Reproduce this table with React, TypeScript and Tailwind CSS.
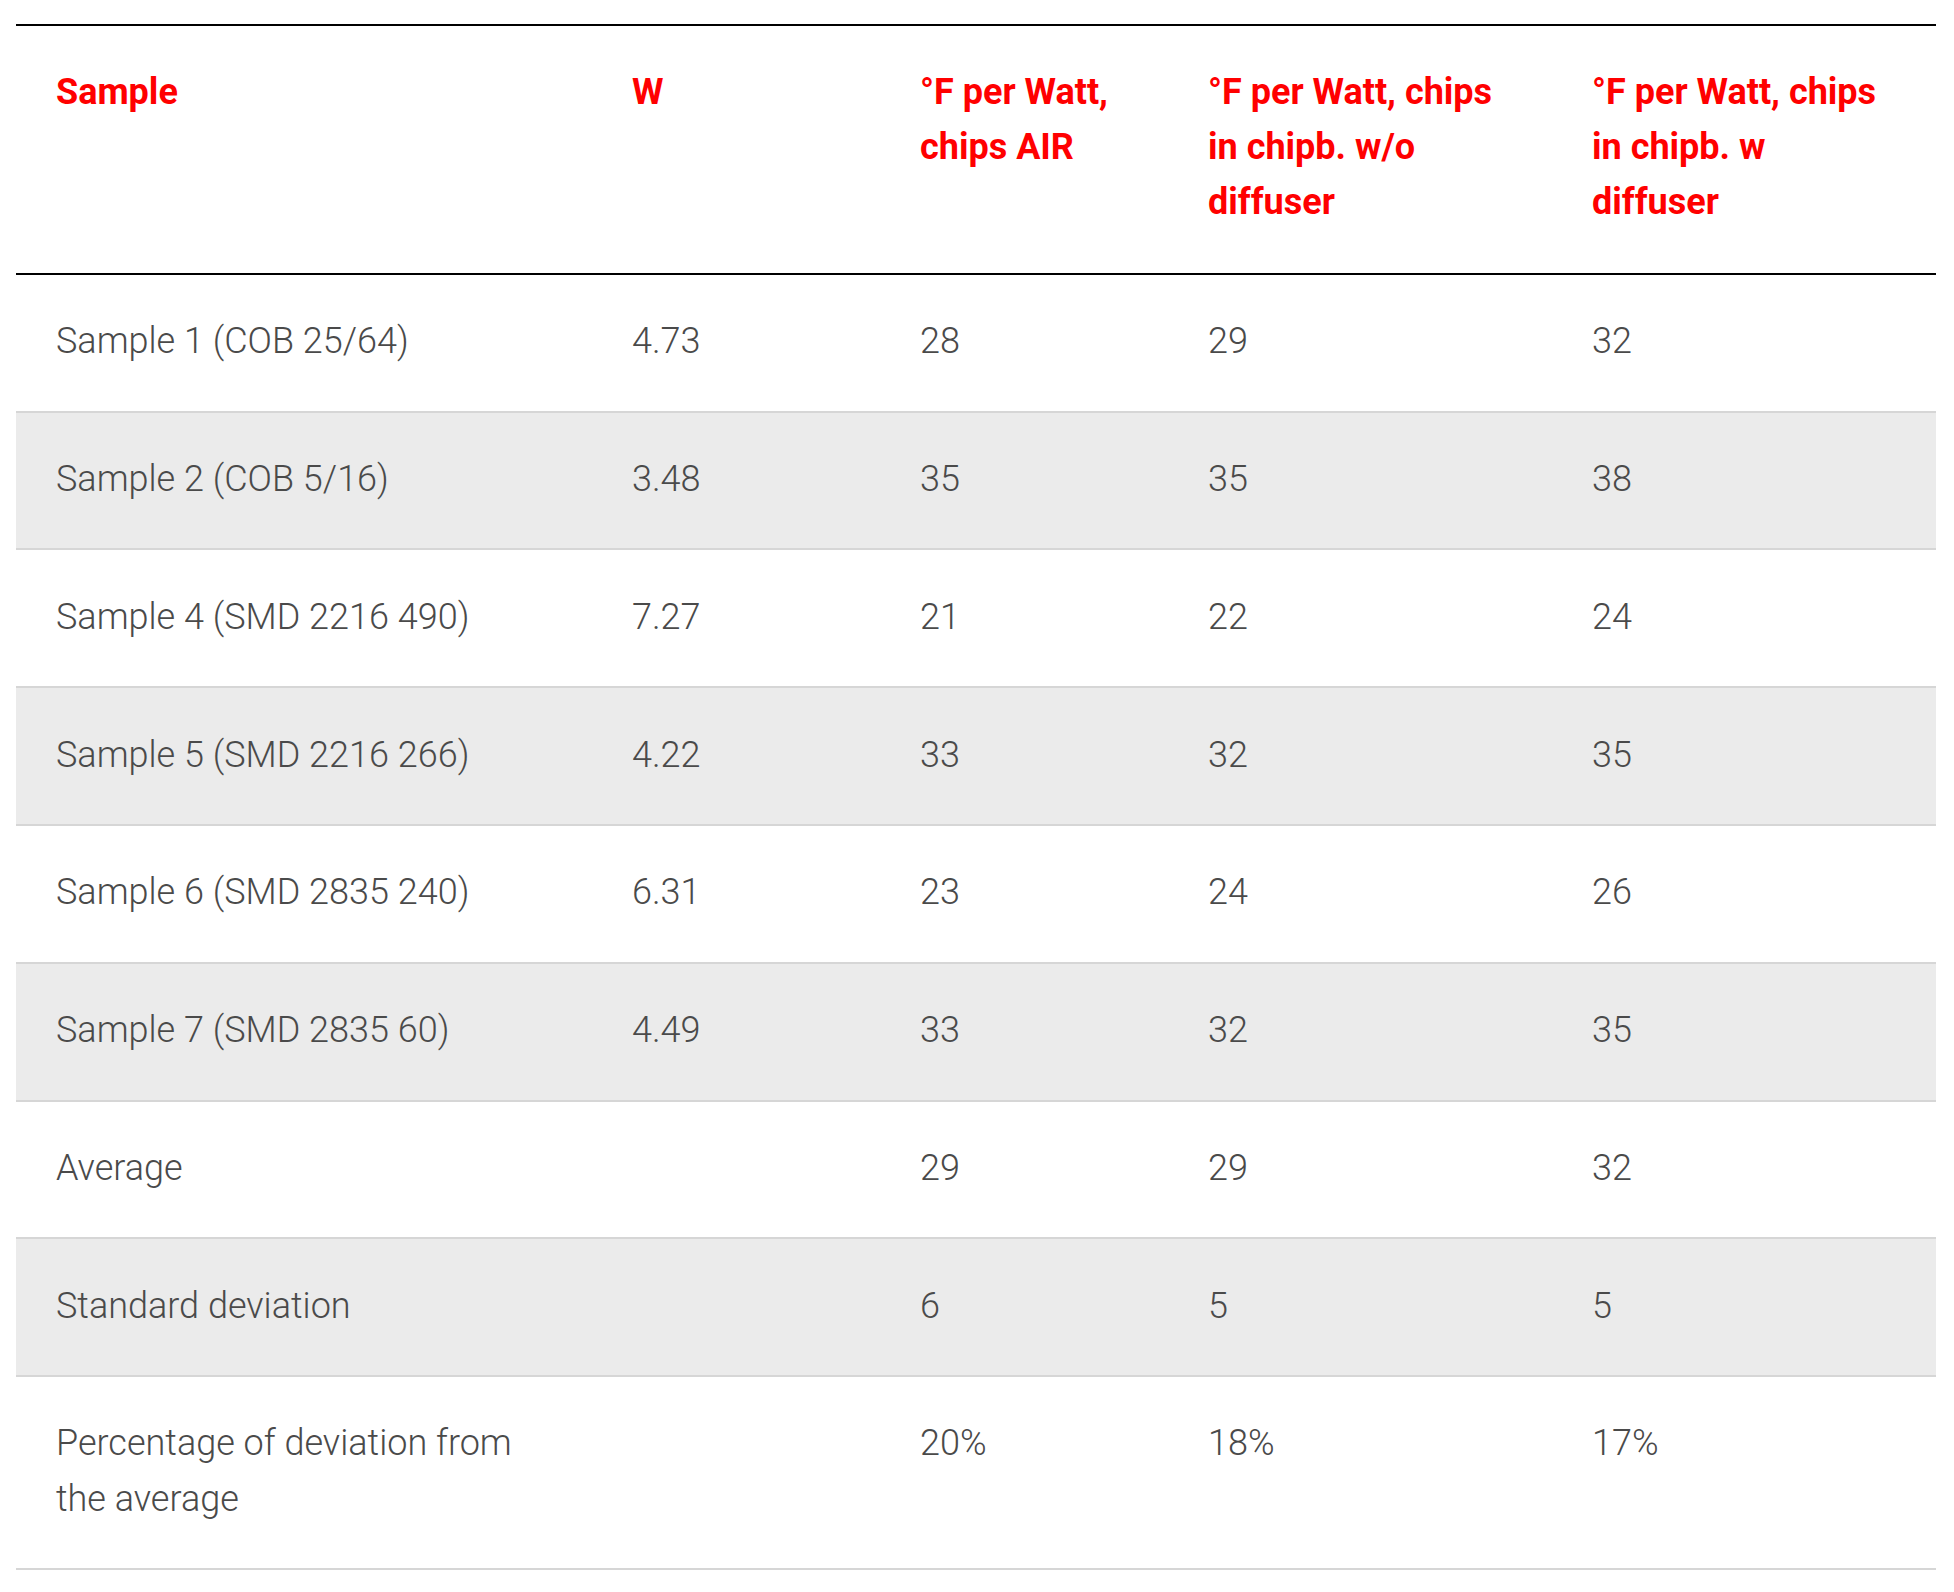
import React from "react";

const rows: string[][] = [
  ["Sample 1 (COB 25/64)", "4.73", "28", "29", "32"],
  ["Sample 2 (COB 5/16)", "3.48", "35", "35", "38"],
  ["Sample 4 (SMD 2216 490)", "7.27", "21", "22", "24"],
  ["Sample 5 (SMD 2216 266)", "4.22", "33", "32", "35"],
  ["Sample 6 (SMD 2835 240)", "6.31", "23", "24", "26"],
  ["Sample 7 (SMD 2835 60)", "4.49", "33", "32", "35"],
  ["Average", "", "29", "29", "32"],
  ["Standard deviation", "", "6", "5", "5"],
  ["Percentage of deviation from the average", "", "20%", "18%", "17%"],
];

const headers = [
  "Sample",
  "W",
  "°F per Watt, chips AIR",
  "°F per Watt, chips in chipb. w/o diffuser",
  "°F per Watt, chips in chipb. w diffuser",
];

export default function App() {
  return (
    <div
      className="min-h-screen bg-white pt-[24px] pl-[16px]"
      style={{ fontFamily: "Roboto, 'Liberation Sans', sans-serif" }}
    >
      <table className="w-[1920px] table-fixed border-collapse text-left">
        <colgroup>
          <col className="w-[576px]" />
          <col className="w-[288px]" />
          <col className="w-[288px]" />
          <col className="w-[384px]" />
          <col className="w-[384px]" />
        </colgroup>
        <thead>
          <tr className="border-t-[2px] border-b-[2px] border-black">
            {headers.map((h, i) => (
              <th
                key={i}
                className="px-[40px] pt-[38.5px] pb-[42.5px] align-top text-[36px] leading-[55.3px] font-bold text-[#ff0000]"
              >
                {h}
              </th>
            ))}
          </tr>
        </thead>
        <tbody>
          {rows.map((r, ri) => (
            <tr
              key={ri}
              className={
                (ri % 2 === 1 ? "bg-[#ebebeb] " : "bg-white ") +
                "border-b-[2px] border-[#d6d6d6]"
              }
            >
              {r.map((c, ci) => (
                <td
                  key={ci}
                  className="px-[40px] pt-[39.3px] pb-[41.2px] align-top text-[36px] leading-[55.3px] font-light text-[#4a4a4a]"
                >
                  {c}
                </td>
              ))}
            </tr>
          ))}
        </tbody>
      </table>
    </div>
  );
}
